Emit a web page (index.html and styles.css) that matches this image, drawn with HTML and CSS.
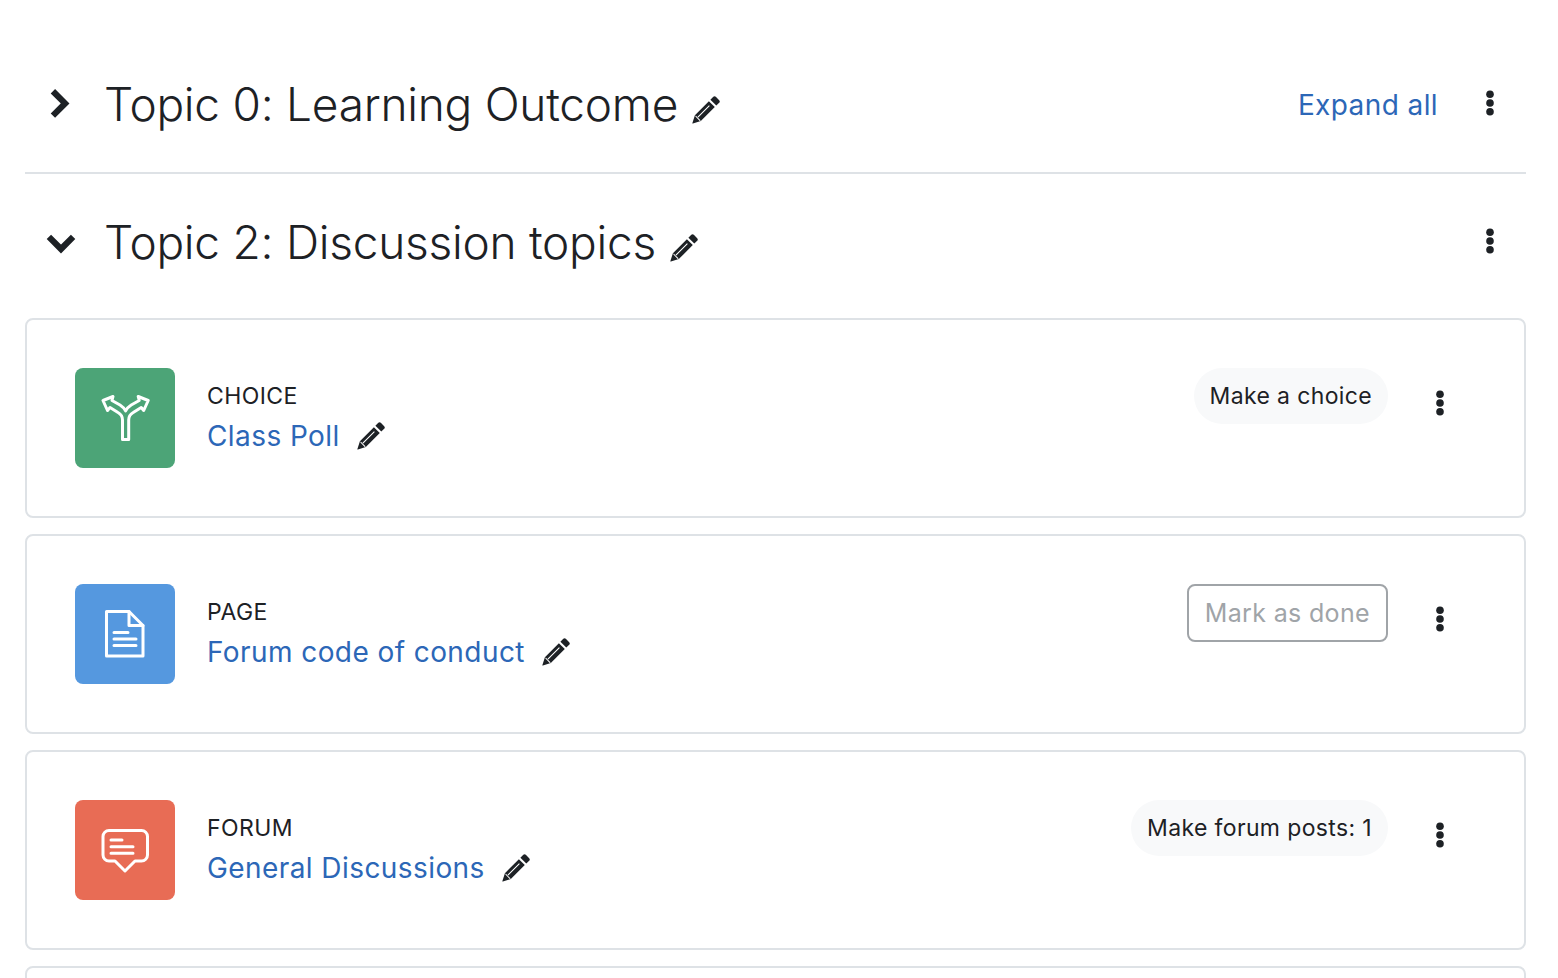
FILE: index.html
```html
<!DOCTYPE html>
<html lang="en">
<head>
<meta charset="utf-8">
<title>Course topics</title>
<link rel="stylesheet" href="styles.css">
</head>
<body>
<svg class="defs" width="0" height="0" aria-hidden="true">
  <defs>
    <symbol id="pencil" viewBox="0 0 28 28">
      <path fill="currentColor" fill-rule="evenodd" d="M21.300.8a1.800 1.800 0 0 1 2.500 0l3.400 3.400a1.800 1.800 0 0 1 0 2.500l-2.900 2.900-5.900-5.900zM16.900 5.200l5.900 5.900L8.800 25.100.9 27.500a.4.4 0 0 1-.5-.5l2.500-7.800zM17 9.200 5.500 20.700l.8.8L17.800 10zM3.400 20.600 7.700 24.900l1-.3-5-5z"/>
    </symbol>
    <symbol id="dots" viewBox="0 0 10 26">
      <circle cx="5" cy="4.300" r="3.800" fill="currentColor"/>
      <circle cx="5" cy="13" r="3.800" fill="currentColor"/>
      <circle cx="5" cy="21.700" r="3.800" fill="currentColor"/>
    </symbol>
  </defs>
</svg>
<main class="page">
  <section class="topic topic-first">
    <div class="topic-head">
      <span class="chev"><svg class="chev-svg" width="26" height="26" viewBox="0 0 26 26"><path d="M6.900 .2 19.100 12.400 6.900 24.600" fill="none" stroke="currentColor" stroke-width="6.200"/></svg></span>
      <h2 class="topic-title">Topic 0: Learning Outcome</h2>
      <svg class="pencil pencil-head"><use href="#pencil"/></svg>
      <a class="expand" href="#">Expand all</a>
      <svg class="dots dots-head"><use href="#dots"/></svg>
    </div>
  </section>
  <section class="topic">
    <div class="topic-head">
      <span class="chev"><svg class="chev-svg" width="30" height="26" viewBox="0 0 30 26"><path d="M2.900 7.900 15 20 27.100 7.900" fill="none" stroke="currentColor" stroke-width="6.200"/></svg></span>
      <h2 class="topic-title">Topic 2: Discussion topics</h2>
      <svg class="pencil pencil-head"><use href="#pencil"/></svg>
      <span class="spacer"></span>
      <svg class="dots dots-head"><use href="#dots"/></svg>
    </div>
    <div class="cards">
      <article class="card">
        <div class="icon icon-choice">
          <svg width="50" height="50" viewBox="0 0 50 50" fill="none" stroke="#fff" stroke-width="3" stroke-linejoin="round" stroke-linecap="round"><path d="M22.500 46.500V27Q22.500 22 18 19.500L10 14.500 7.500 17.500 3 7.500 13 3.500 12 7.500 20 12Q24 14.500 25.600 18 27.200 14.500 31.200 12L39.200 7.500 38.200 3.500 48.200 7.500 43.700 17.500 41.200 14.500 33.200 19.500Q28.700 22 28.700 27V46.500Z"/></svg>
        </div>
        <div class="meta">
          <div class="kind">CHOICE</div>
          <div class="name"><a href="#">Class Poll</a><svg class="pencil"><use href="#pencil"/></svg></div>
        </div>
        <div class="status"><span class="pill">Make a choice</span></div>
        <svg class="dots"><use href="#dots"/></svg>
      </article>
      <article class="card">
        <div class="icon icon-page">
          <svg width="50" height="50" viewBox="0 0 50 50" fill="none" stroke="#fff" stroke-width="3" stroke-linejoin="round" stroke-linecap="round"><path d="M6.500 2.500H29L43 16.500V47H6.500Z"/><path d="M29 2.500V16.500H43"/><path d="M14 23.500H28M14 30H36M14 36.500H36"/></svg>
        </div>
        <div class="meta">
          <div class="kind">PAGE</div>
          <div class="name"><a href="#">Forum code of conduct</a><svg class="pencil"><use href="#pencil"/></svg></div>
        </div>
        <div class="status"><span class="done">Mark as done</span></div>
        <svg class="dots"><use href="#dots"/></svg>
      </article>
      <article class="card">
        <div class="icon icon-forum">
          <svg width="50" height="50" viewBox="0 0 50 50" fill="none" stroke="#fff" stroke-width="3" stroke-linejoin="round" stroke-linecap="round"><path d="M9 5.500H41.500a6 6 0 0 1 6 6V30a6 6 0 0 1-6 6H35L25 46 15 36H9a6 6 0 0 1-6-6V11.500a6 6 0 0 1 6-6Z"/><path d="M11 15H22M11 21.700H33M11 28.300H33"/></svg>
        </div>
        <div class="meta">
          <div class="kind">FORUM</div>
          <div class="name"><a href="#">General Discussions</a><svg class="pencil"><use href="#pencil"/></svg></div>
        </div>
        <div class="status"><span class="pill">Make forum posts: 1</span></div>
        <svg class="dots"><use href="#dots"/></svg>
      </article>
      <article class="card card-cut"></article>
    </div>
  </section>
</main>
</body>
</html>
```
FILE: styles.css
```css
* { box-sizing: border-box; }
html, body { margin: 0; height: 100%; overflow: hidden; }
body {
  background: #fff;
  color: #1d2125;
  font-family: Inter, "Liberation Sans", sans-serif;
}
.defs { display: block; height: 0; }
.page { padding: 68px 32px 0 25px; }
.topic-head {
  display: flex;
  align-items: center;
  height: 72px;
}
.topic-first { height: 106px; border-bottom: 2px solid #dee2e6; margin-bottom: 32px; }
.chev {
  width: 79px;
  padding-left: 21px;
  display: flex;
  align-items: center;
  color: #1d2125;
  flex: none;
}
.chev-svg { overflow: visible; display: block; }
.topic-title {
  margin: 0;
  font-size: 46px;
  font-weight: 300;
  line-height: 72px;
  letter-spacing: -0.25px;
}
.pencil { width: 28px; height: 28px; color: #1d2125; display: block; flex: none; }
.pencil-head { margin: 11px 0 0 14px; }
.expand {
  margin-left: auto;
  margin-right: 47px;
  padding-top: 2px;
  font-size: 28px;
  letter-spacing: 0.4px;
  color: #2c67b7;
  text-decoration: none;
}
.spacer { margin-left: auto; }
.dots { width: 10px; height: 26px; color: #1d2125; display: block; flex: none; }
.dots-head { margin: 0 31px 2px 0; }
.cards { margin-top: 40px; display: flex; flex-direction: column; gap: 16px; }
.card {
  height: 200px;
  border: 2px solid #dee2e6;
  border-radius: 8px;
  padding: 48px;
  display: flex;
  align-items: flex-start;
}
.icon {
  width: 100px;
  height: 100px;
  border-radius: 8px;
  display: flex;
  align-items: center;
  justify-content: center;
  flex: none;
}
.icon-choice { background: #4ca477; }
.icon-page { background: #5598df; }
.icon-forum { background: #e86c55; }
.meta { margin-left: 32px; padding-top: 12px; }
.kind { font-size: 23px; line-height: 32px; letter-spacing: 0.4px; }
.name { display: flex; align-items: center; margin-top: 4px; }
.name a { font-size: 28px; line-height: 40px; letter-spacing: 0.42px; color: #2c67b7; text-decoration: none; }
.name .pencil { margin-left: 17px; }
.status { margin-left: auto; display: flex; }
.pill {
  display: block;
  height: 56px;
  padding: 1px 16px 0;
  border-radius: 28px;
  background: #f8f9fa;
  font-size: 23px;
  letter-spacing: 0.36px;
  line-height: 55px;
}
.done {
  display: block;
  height: 58px;
  padding: 1px 16px 0;
  border: 2px solid #a0a4a8;
  border-radius: 8px;
  color: #a0a4a8;
  font-size: 25px;
  letter-spacing: 0.35px;
  line-height: 53px;
}
.card .dots { margin: 22px 31px 0 47px; }
.card-cut { height: 60px; }
```
